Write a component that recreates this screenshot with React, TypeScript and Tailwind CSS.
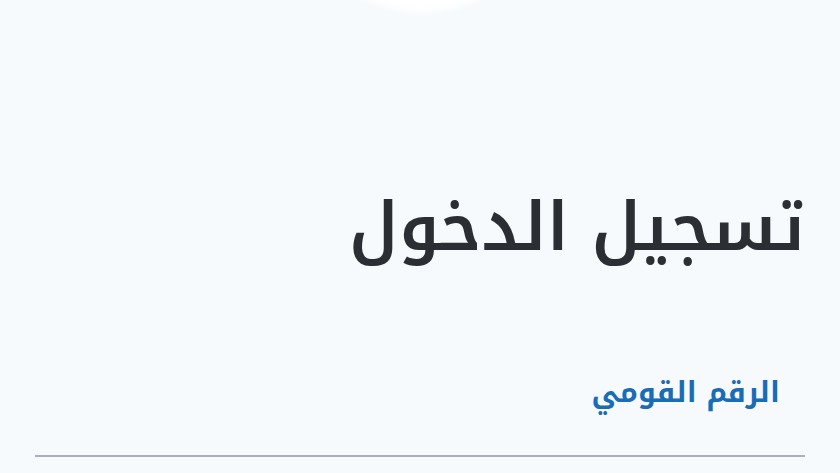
export default function App() {
  return (
    <div
      dir="rtl"
      className="relative h-[473px] w-[840px] overflow-hidden bg-[#f6fafd]"
      style={{ fontFamily: '"Noto Kufi Arabic", "Noto Sans", sans-serif' }}
    >
      {/* logo bottom edge peeking in from the top */}
      <div className="absolute left-[297px] top-[-238px] h-[250px] w-[250px] rounded-full bg-white blur-[4px]" />

      <div className="flex flex-col pr-[35px] pl-[35px] pt-[178px]">
        <h1 className="text-right text-[67px] font-semibold leading-[100px] text-[#2b2f33]">
          تسجيل الدخول
        </h1>
        <label className="mt-[95px] pr-[25px] text-right text-[28.5px] font-bold leading-[40px] text-[#1a6cb5]">
          الرقم القومي
        </label>
        <div className="mt-[42px] h-[2px] w-full bg-[#aab0b5]" />
      </div>
    </div>
  )
}
